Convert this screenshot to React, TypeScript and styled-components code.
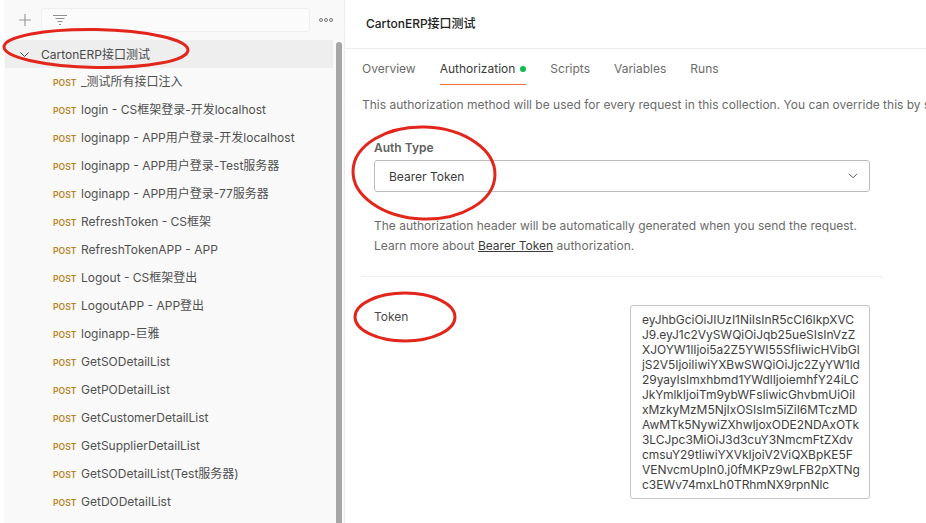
import React from "react";
import styled, { createGlobalStyle } from "styled-components";

const Global = createGlobalStyle`
  html, body { margin: 0; padding: 0; background: #fff; overflow: hidden; }
  body { font-family: Inter, "Noto Sans CJK SC", sans-serif; font-size: 12px; color: #3b3b3b; }
  * { box-sizing: border-box; }
`;

const Page = styled.div`
  position: relative;
  width: 926px;
  height: 523px;
  display: flex;
  overflow: hidden;
  background: #fff;
`;

const Sidebar = styled.aside`
  width: 345px;
  height: 523px;
  flex: none;
  background: #f9f9f9;
  border-right: 1px solid #ededed;
  border-left: 4px solid #fff;
  position: relative;
  overflow: hidden;
`;

const Toolbar = styled.div`
  height: 40px;
  display: flex;
  align-items: center;
  padding: 0 0 0 11px;
  color: #9a9a9a;
`;

const PlusButton = styled.span`
  width: 20px;
  height: 20px;
  display: flex;
  align-items: center;
  justify-content: center;
  margin-right: 6px;
`;

const Search = styled.div`
  width: 269px;
  height: 24px;
  border: 1px solid #f0f0f0;
  border-radius: 3px;
  background: #fbfbfb;
  display: flex;
  align-items: center;
  padding-left: 11px;
`;

const More = styled.span`
  margin-left: 9px;
  display: flex;
  gap: 1px;
`;

const Dot = styled.i`
  width: 4px;
  height: 4px;
  border: 1px solid #777;
  border-radius: 50%;
`;

const List = styled.div`
  width: 328px;
  margin-left: 1px;
`;

const CollectionRow = styled.div`
  height: 28px;
  background: #eeeeee;
  display: flex;
  align-items: center;
  padding: 0 0 0 15px;
  gap: 12px;
  font-size: 12px;
  line-height: 27px;
  color: #4a4a4a;
`;

const RequestRow = styled.div`
  height: 28px;
  display: flex;
  align-items: baseline;
  padding-left: 48px;
  font-size: 12px;
  line-height: 27px;
  color: #505050;
  white-space: nowrap;
`;

const Method = styled.span`
  width: 28px;
  flex: none;
  font-size: 8.6px;
  font-weight: 600;
  color: #b5851f;
`;

const Scrollbar = styled.div`
  position: absolute;
  top: 42px;
  bottom: 0;
  left: 332px;
  width: 6px;
  border-radius: 3px 3px 0 0;
  background: #a6a6a6;
`;

const Main = styled.main`
  flex: 1;
  min-width: 0;
`;

const Title = styled.header`
  height: 49px;
  padding: 0 0 3px 21px;
  display: flex;
  align-items: center;
  border-bottom: 1px solid #ededed;
  font-size: 12px;
  font-weight: 500;
  color: #212121;
`;

const Tabs = styled.nav`
  display: flex;
  gap: 24px;
  height: 36px;
  padding: 0 0 0 17px;
  margin-bottom: 12px;
`;

const Tab = styled.div<{ $active?: boolean }>`
  height: 36px;
  padding-top: 12px;
  display: flex;
  align-items: flex-start;
  gap: 5px;
  font-size: 12px;
  line-height: 15px;
  color: ${(p) => (p.$active ? "#3b3b3b" : "#6b6b6b")};
  border-bottom: 1px solid ${(p) => (p.$active ? "#f26b3a" : "transparent")};
`;

const StatusDot = styled.span`
  width: 6px;
  height: 6px;
  margin-top: 5px;
  border-radius: 50%;
  background: #0cbb52;
`;

const Description = styled.p`
  margin: 0 0 0 17px;
  height: 16px;
  line-height: 16px;
  font-size: 12px;
  color: #6b6b6b;
  white-space: nowrap;
`;

const AuthBlock = styled.section`
  margin: 27px 0 0 29px;
  width: 496px;
`;

const Label = styled.div`
  font-size: 12px;
  line-height: 15px;
  font-weight: 600;
  color: #5f5f5f;
  margin-bottom: 5px;
`;

const Select = styled.div`
  height: 32px;
  border: 1px solid #bdbdbd;
  border-radius: 3px;
  display: flex;
  align-items: center;
  justify-content: space-between;
  padding: 0 11px 0 14px;
  font-size: 12px;
  color: #3b3b3b;
`;

const Help = styled.p`
  margin: 24px 0 0;
  font-size: 12px;
  line-height: 20px;
  color: #6b6b6b;
  white-space: nowrap;
`;

const DocLink = styled.a`
  color: #3b3b3b;
  text-decoration: underline;
`;

const Divider = styled.hr`
  margin: 20px 0 0 16px;
  width: 522px;
  height: 1px;
  border: 0;
  background: #ededed;
`;

const TokenRow = styled.section`
  margin: 28px 0 0 29px;
  width: 496px;
  display: flex;
  justify-content: space-between;
`;

const TokenLabel = styled.div`
  font-size: 12px;
  line-height: 15px;
  margin-top: 4px;
  color: #4a4a4a;
`;

const TokenBox = styled.div`
  width: 240px;
  height: 194px;
  border: 1px solid #c4c4c4;
  border-radius: 3px;
  padding: 6px 11px;
  font-size: 12px;
  line-height: 15px;
  letter-spacing: -0.04px;
  color: #3f3f3f;
  white-space: pre;
`;

const Annotations = styled.svg`
  position: absolute;
  inset: 0;
  pointer-events: none;
`;

const requests = [
  "_测试所有接口注入",
  "login - CS框架登录-开发localhost",
  "loginapp - APP用户登录-开发localhost",
  "loginapp - APP用户登录-Test服务器",
  "loginapp - APP用户登录-77服务器",
  "RefreshToken - CS框架",
  "RefreshTokenAPP - APP",
  "Logout - CS框架登出",
  "LogoutAPP - APP登出",
  "loginapp-巨雅",
  "GetSODetailList",
  "GetPODetailList",
  "GetCustomerDetailList",
  "GetSupplierDetailList",
  "GetSODetailList(Test服务器)",
  "GetDODetailList",
];

const token = [
  "eyJhbGciOiJIUzI1NiIsInR5cCI6IkpXVC",
  "J9.eyJ1c2VySWQiOiJqb25ueSIsInVzZ",
  "XJOYW1lIjoi5a2Z5YWI55SfIiwicHVibGl",
  "jS2V5IjoiIiwiYXBwSWQiOiJjc2ZyYW1ld",
  "29yayIsImxhbmd1YWdlIjoiemhfY24iLC",
  "JkYmlkIjoiTm9ybWFsIiwicGhvbmUiOiI",
  "xMzkyMzM5NjIxOSIsIm5iZiI6MTczMD",
  "AwMTk5NywiZXhwIjoxODE2NDAxOTk",
  "3LCJpc3MiOiJ3d3cuY3NmcmFtZXdv",
  "cmsuY29tIiwiYXVkIjoiV2ViQXBpKE5F",
  "VENvcmUpIn0.j0fMKPz9wLFB2pXTNg",
  "c3EWv74mxLh0TRhmNX9rpnNlc",
].join("\n");

export default function App() {
  return (
    <Page>
      <Global />
      <Sidebar>
        <Toolbar>
          <PlusButton>
            <svg width="12" height="12" viewBox="0 0 12 12" fill="none" stroke="#9a9a9a" strokeWidth="1.2">
              <path d="M6 0v12M0 6h12" />
            </svg>
          </PlusButton>
          <Search>
            <svg width="14" height="12" viewBox="0 0 14 12" fill="none" stroke="#8f8f8f" strokeWidth="1">
              <path d="M0 1.5h14M2.5 4.5h9M4.5 7.5h5M6 10.5h2" />
            </svg>
          </Search>
          <More>
            <Dot />
            <Dot />
            <Dot />
          </More>
        </Toolbar>
        <List>
          <CollectionRow>
            <svg width="9" height="5" viewBox="0 0 9 5" fill="none" stroke="#444" strokeWidth="1">
              <path d="M0.5 0.5l4 4 4-4" />
            </svg>
            CartonERP接口测试
          </CollectionRow>
          {requests.map((name) => (
            <RequestRow key={name}>
              <Method>POST</Method>
              {name}
            </RequestRow>
          ))}
        </List>
        <Scrollbar />
      </Sidebar>
      <Main>
        <Title>CartonERP接口测试</Title>
        <Tabs>
          <Tab>Overview</Tab>
          <Tab $active>
            Authorization
            <StatusDot />
          </Tab>
          <Tab>Scripts</Tab>
          <Tab>Variables</Tab>
          <Tab>Runs</Tab>
        </Tabs>
        <Description>
          This authorization method will be used for every request in this collection. You can override this by specifying one in the request.
        </Description>
        <AuthBlock>
          <Label>Auth Type</Label>
          <Select>
            Bearer Token
            <svg width="10" height="6" viewBox="0 0 10 6" fill="none" stroke="#555" strokeWidth="1">
              <path d="M1 0.8l4 4 4-4" />
            </svg>
          </Select>
          <Help>
            The authorization header will be automatically generated when you send the request.
            <br />
            Learn more about <DocLink>Bearer Token</DocLink> authorization.
          </Help>
        </AuthBlock>
        <Divider />
        <TokenRow>
          <TokenLabel>Token</TokenLabel>
          <TokenBox>{token}</TokenBox>
        </TokenRow>
      </Main>
      <Annotations width="926" height="523" viewBox="0 0 926 523" fill="none" stroke="#e3261c" strokeWidth="3">
        <ellipse cx="96" cy="48.5" rx="92" ry="19" transform="rotate(1 96 48.5)" />
        <ellipse cx="424" cy="173" rx="71" ry="46" transform="rotate(2 424 173)" />
        <ellipse cx="405" cy="317" rx="50" ry="24" />
      </Annotations>
    </Page>
  );
}
